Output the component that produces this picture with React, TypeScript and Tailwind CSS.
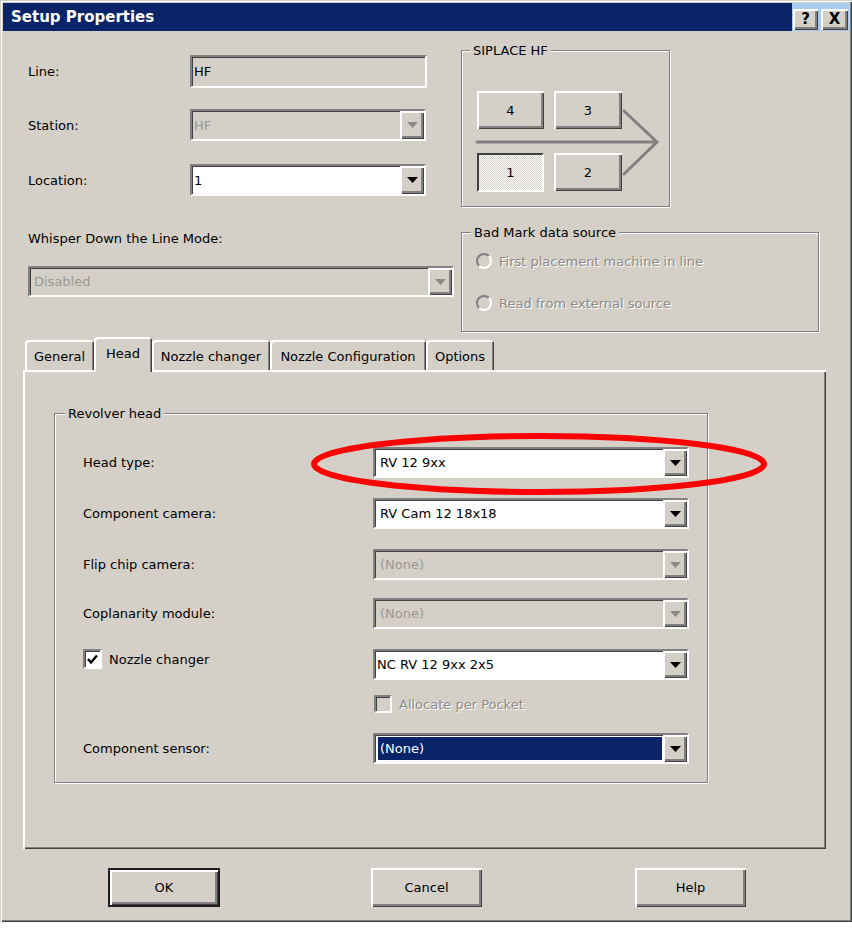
import * as React from "react";

// classic 3D edges, drawn with inset shadows so they don't move the layout
const raised =
  "shadow-[inset_2px_2px_0_#ffffff,inset_-1px_-1px_0_#404040,inset_-3px_-3px_0_#808080]";
const sunken =
  "border-2 border-t-[#808080] border-l-[#808080] border-r-white border-b-white shadow-[inset_1px_1px_0_#404040]";
const etched = "border border-[#808080] shadow-[1px_1px_0_#ffffff,inset_1px_1px_0_#ffffff]";
const embossed = "text-[#8d8b87] [text-shadow:1px_1px_0_#ffffff]";

function Arrow({ disabled }: { disabled?: boolean }) {
  return (
    <svg width="11" height="6" viewBox="0 0 11 6">
      <polygon points="0,0 11,0 5.5,6" fill={disabled ? "#8d8b87" : "#000000"} />
    </svg>
  );
}

function Combo({
  value,
  disabled,
  selected,
  className = "",
  pad = "pl-[5px]",
}: {
  value: string;
  disabled?: boolean;
  selected?: boolean;
  className?: string;
  pad?: string;
}) {
  return (
    <div className={`flex ${sunken} ${disabled ? "bg-[#d4d0c8]" : "bg-white"} ${className}`}>
      {selected ? (
        <div className="flex-1 flex items-center my-[2px] ml-[3px] mr-[1px] bg-[#0a246a] text-white pl-[2px]">
          {value}
        </div>
      ) : (
        <div className={`flex-1 flex items-center ${pad} ${disabled ? "text-[#9a9894]" : ""}`}>{value}</div>
      )}
      <div className={`w-[24px] flex items-center justify-center bg-[#d4d0c8] ${raised}`}>
        <Arrow disabled={disabled} />
      </div>
    </div>
  );
}

function Group({
  label,
  labelLeft,
  className = "",
  children,
}: {
  label: string;
  labelLeft: string;
  className?: string;
  children?: React.ReactNode;
}) {
  return (
    <div className={`relative ${etched} ${className}`}>
      <span className={`absolute -top-[9px] ${labelLeft} h-[16px] px-[3px] flex items-center bg-[#d4d0c8]`}>
        {label}
      </span>
      {children}
    </div>
  );
}

function Radio({ label }: { label: string }) {
  return (
    <div className="flex items-center h-[16px] gap-[7px]">
      <div className="w-[16px] h-[16px] rounded-full border-2 border-t-[#808080] border-l-[#808080] border-r-white border-b-white bg-[#d4d0c8]" />
      <span className={embossed}>{label}</span>
    </div>
  );
}

function Tab({ label, active, width }: { label: string; active?: boolean; width: string }) {
  return (
    <div
      className={`${width} flex items-center justify-center rounded-t-[3px] bg-[#d4d0c8] shadow-[inset_2px_2px_0_#ffffff,inset_-1px_0_0_#404040,inset_-2px_0_0_#808080] ${
        active ? "relative z-10 h-[35px] -mb-[2px] pb-[2px]" : "h-[30px] pt-[3px]"
      }`}
    >
      {label}
    </div>
  );
}

function Button({ label, isDefault, width }: { label: string; isDefault?: boolean; width: string }) {
  return (
    <div className={`${width} h-[39px] ${isDefault ? "border-2 border-[#1c1c1c]" : ""}`}>
      <div className={`w-full h-full flex items-center justify-center bg-[#d4d0c8] ${raised}`}>{label}</div>
    </div>
  );
}

function MachineButton({ label, pressed }: { label: string; pressed?: boolean }) {
  if (pressed) {
    return (
      <div className="relative z-10 h-[39px] flex items-center justify-center border-2 border-t-[#404040] border-l-[#404040] border-r-white border-b-white bg-[repeating-conic-gradient(#ffffff_0_25%,#d4d0c8_0_50%)] bg-[length:2px_2px]">
        {label}
      </div>
    );
  }
  return (
    <div className={`relative z-10 h-[38px] flex items-center justify-center bg-[#d4d0c8] ${raised}`}>{label}</div>
  );
}

export default function App() {
  return (
    <div className="relative w-[852px] h-[928px] bg-white font-['DejaVu_Sans',sans-serif] text-[13px] leading-none text-black">
      <div className="w-[852px] h-[922px] p-[3px] bg-[#d4d0c8] shadow-[inset_1px_1px_0_#d4d0c8,inset_2px_2px_0_#ffffff,inset_-1px_-1px_0_#404040,inset_-2px_-2px_0_#808080]">
        {/* title bar */}
        <div className="flex h-[28px]">
          <div className="flex-1 flex items-center bg-[#0a246a] pl-[8px] text-white font-bold text-[15px]">
            Setup Properties
          </div>
          <div className="w-[57px] flex items-start pt-[6px] pl-[1px] gap-[3px] bg-[#a6caf0]">
            <div className={`w-[25px] h-[21px] flex items-center justify-center bg-[#d4d0c8] font-bold text-[15px] ${raised}`}>
              ?
            </div>
            <div className={`w-[27px] h-[21px] flex items-center justify-center bg-[#d4d0c8] font-bold text-[15px] ${raised}`}>
              X
            </div>
          </div>
        </div>

        <div className="pl-[20px] pt-[19px]">
          {/* top: fields + machine picture */}
          <div className="flex">
            <div className="ml-[5px] w-[433px] pt-[5px] flex flex-col">
              <div className="flex items-center h-[33px]">
                <span className="w-[162px]">Line:</span>
                <div className={`w-[237px] h-full flex items-center pl-[2px] bg-[#d4d0c8] ${sunken}`}>HF</div>
              </div>
              <div className="flex items-center h-[32px] mt-[21px]">
                <span className="w-[162px]">Station:</span>
                <Combo value="HF" disabled pad="pl-[2px]" className="w-[236px] h-full" />
              </div>
              <div className="flex items-center h-[32px] mt-[23px]">
                <span className="w-[162px]">Location:</span>
                <Combo value="1" pad="pl-[2px]" className="w-[236px] h-full" />
              </div>
            </div>

            <Group label="SIPLACE HF" labelLeft="left-[8px]" className="w-[209px] h-[157px]">
              <svg className="absolute left-0 top-0 pointer-events-none" width="207" height="155" viewBox="0 0 207 155">
                <g stroke="#808080" strokeWidth="3" fill="none" strokeLinecap="round" strokeLinejoin="round">
                  <line x1="15" y1="91" x2="195" y2="91" />
                  <polyline points="162,60 195,91 162,123" />
                </g>
              </svg>
              <div className="grid grid-cols-[67px_68px] gap-x-[10px] gap-y-[24px] pl-[15px] pt-[40px]">
                <MachineButton label="4" />
                <MachineButton label="3" />
                <MachineButton label="1" pressed />
                <MachineButton label="2" />
              </div>
            </Group>
          </div>

          {/* whisper + bad mark */}
          <div className="flex">
            <div className="ml-[5px] w-[433px] flex flex-col">
              <div className="mt-[23px] h-[16px] flex items-center">Whisper Down the Line Mode:</div>
              <Combo value="Disabled" disabled pad="pl-[4px]" className="mt-[20px] w-[426px] h-[31px]" />
            </div>
            <Group label="Bad Mark data source" labelLeft="left-[9px]" className="mt-[25px] w-[358px] h-[100px]">
              <div className="flex flex-col pl-[14px] pt-[20px] gap-[26px]">
                <Radio label="First placement machine in line" />
                <Radio label="Read from external source" />
              </div>
            </Group>
          </div>

          {/* tabs */}
          <div className="mt-[5px] ml-[2px] flex items-end h-[33px]">
            <Tab label="General" width="w-[69px]" />
            <Tab label="Head" width="w-[58px]" active />
            <Tab label="Nozzle changer" width="w-[118px]" />
            <Tab label="Nozzle Configuration" width="w-[156px]" />
            <Tab label="Options" width="w-[68px]" />
          </div>
          <div className="w-[803px] h-[479px] pl-[31px] pt-[43px] shadow-[inset_2px_2px_0_#ffffff,inset_-1px_-1px_0_#404040,inset_-2px_-2px_0_#808080]">
            <Group label="Revolver head" labelLeft="left-[10px]" className="w-[654px] h-[370px]">
              <div className="flex flex-col pl-[28px] pt-[33px]">
                <div className="flex items-center h-[31px]">
                  <span className="w-[290px]">Head type:</span>
                  <Combo value="RV 12 9xx" className="w-[316px] h-full" />
                </div>
                <div className="flex items-center h-[31px] mt-[20px]">
                  <span className="w-[290px]">Component camera:</span>
                  <Combo value="RV Cam 12 18x18" className="w-[316px] h-full" />
                </div>
                <div className="flex items-center h-[31px] mt-[20px]">
                  <span className="w-[290px]">Flip chip camera:</span>
                  <Combo value="(None)" disabled className="w-[316px] h-full" />
                </div>
                <div className="flex items-center h-[31px] mt-[18px]">
                  <span className="w-[290px]">Coplanarity module:</span>
                  <Combo value="(None)" disabled className="w-[316px] h-full" />
                </div>
                <div className="flex items-start h-[31px] mt-[20px]">
                  <div className="w-[290px] flex items-center h-[20px] gap-[7px]">
                    <div className={`w-[19px] h-[20px] flex items-center justify-center bg-white ${sunken}`}>
                      <svg width="11" height="11" viewBox="0 0 11 11">
                        <polyline points="1,5 4,8.5 10,1.5" fill="none" stroke="#000" strokeWidth="2.4" />
                      </svg>
                    </div>
                    <span>Nozzle changer</span>
                  </div>
                  <Combo value="NC RV 12 9xx 2x5" pad="pl-[2px]" className="w-[316px] h-full" />
                </div>
                <div className="flex items-center h-[18px] mt-[15px] pl-[291px] gap-[7px]">
                  <div className={`w-[18px] h-[18px] bg-[#d4d0c8] ${sunken}`} />
                  <span className={embossed}>Allocate per Pocket</span>
                </div>
                <div className="flex items-center h-[31px] mt-[20px]">
                  <span className="w-[290px]">Component sensor:</span>
                  <Combo value="(None)" selected className="w-[316px] h-full" />
                </div>
              </div>
            </Group>
          </div>

          {/* dialog buttons */}
          <div className="flex mt-[19px]">
            <div className="ml-[85px]">
              <Button label="OK" isDefault width="w-[112px]" />
            </div>
            <div className="ml-[151px]">
              <Button label="Cancel" width="w-[111px]" />
            </div>
            <div className="ml-[153px]">
              <Button label="Help" width="w-[111px]" />
            </div>
          </div>
        </div>
      </div>

      {/* red annotation ring drawn over the dialog */}
      <svg className="absolute left-[310px] top-[432px] pointer-events-none" width="460" height="64" viewBox="0 0 460 64">
        <ellipse cx="229" cy="32" rx="225" ry="28" fill="none" stroke="#ff0000" strokeWidth="6" />
      </svg>
    </div>
  );
}
